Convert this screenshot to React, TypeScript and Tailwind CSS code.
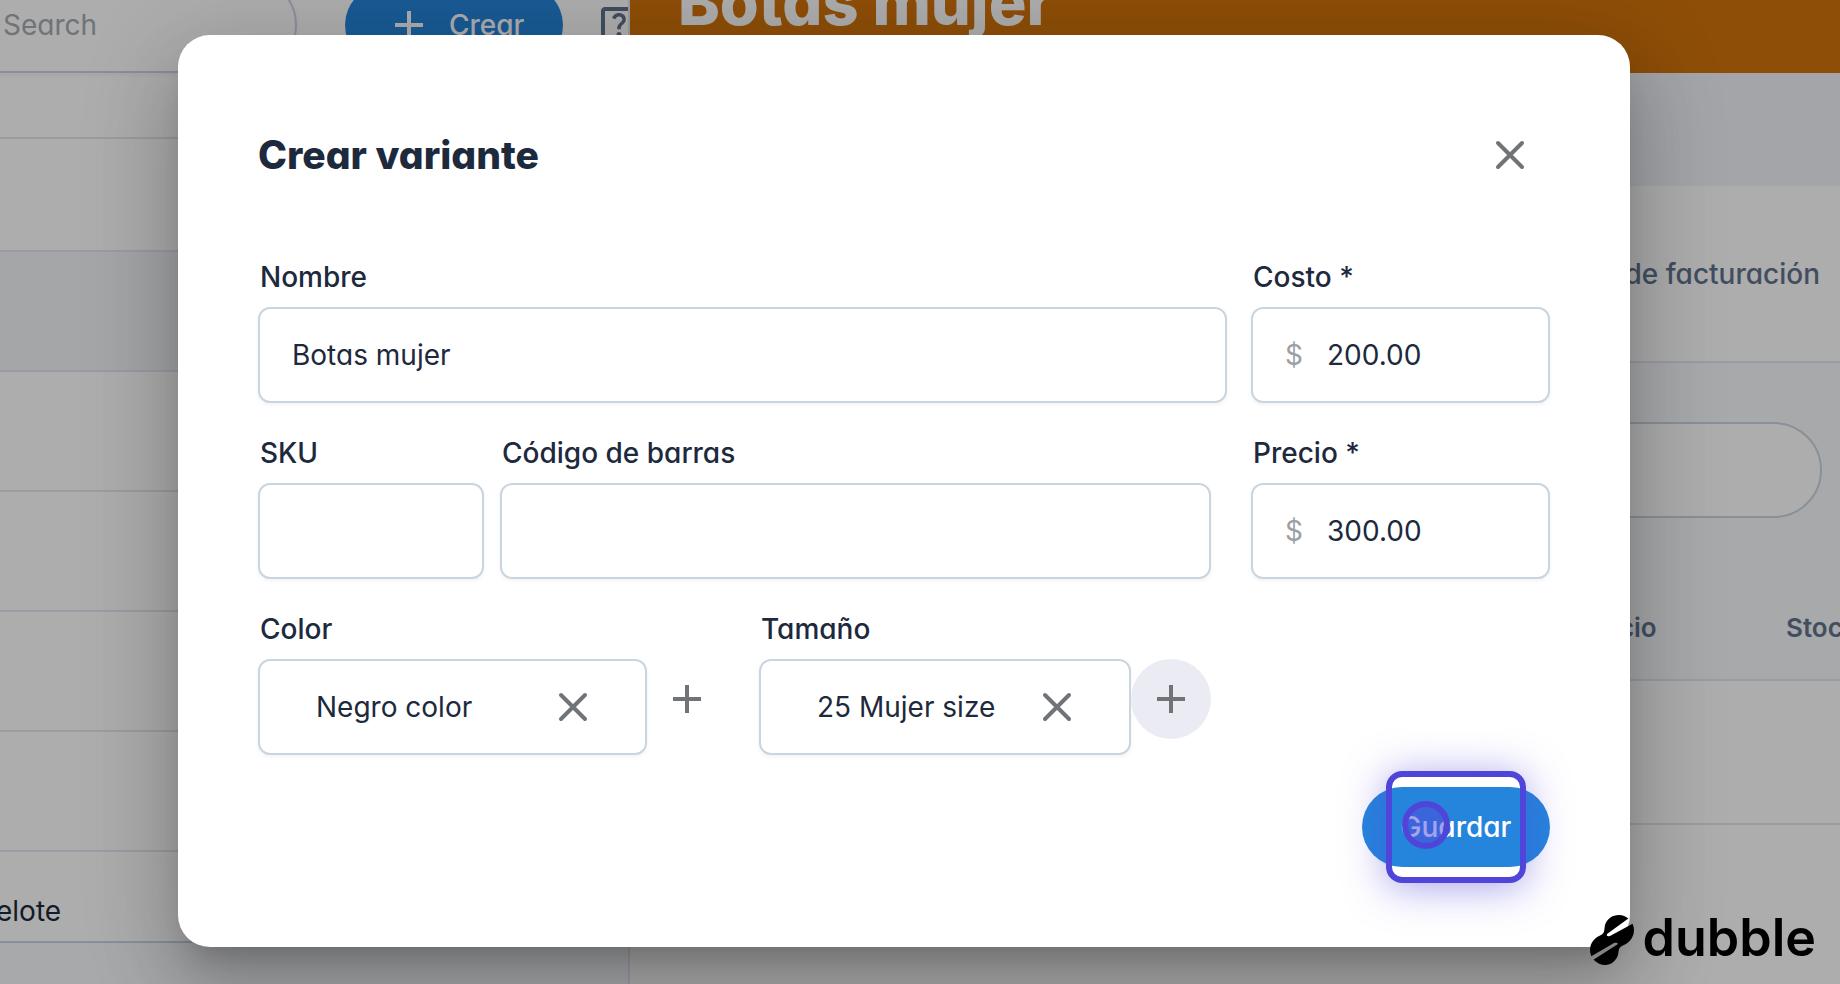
import type { ComponentProps, ReactNode } from "react";
import { MdAdd, MdOutlineHelpCenter } from "react-icons/md";

const products = ["", "", "", "", "", "", "elote"];

function XIcon(props: ComponentProps<"svg">) {
    return (
        <svg viewBox="0 0 24 24" fill="none" stroke="currentColor" strokeWidth="2" strokeLinecap="round" aria-hidden="true" {...props}>
            <path d="M6 18L18 6M6 6l12 12" />
        </svg>
    );
}

function DubbleMark(props: ComponentProps<"svg">) {
    return (
        <svg viewBox="0 -3 44 53" aria-hidden="true" {...props}>
            <mask id="slits">
                <rect width="44" height="50" fill="#fff" />
                <path d="M39 3L17 19Q16 22 20 21L44 8Z" fill="#000" />
                <path d="M0 42L24 28Q27 27 28 29L3 45Z" fill="#000" />
            </mask>
            <path
                mask="url(#slits)"
                d="M29 0C37 0 44 7 44 15C44 24 37 29 32 31C28 33 29 36 28 40C26 46 21 50 15 50C7 50 0 43 0 35C0 27 6 22 11 20C15 18 14 15 15 10C17 4 22 0 29 0Z"
            />
        </svg>
    );
}

function Field({ id, label, className = "", children }: { id: string; label: string; className?: string; children: ReactNode }) {
    return (
        <div className={className}>
            <label htmlFor={id} className="mb-2 ml-[2px] block leading-[44px] font-medium whitespace-nowrap">
                {label}
            </label>
            <div className="flex h-24 items-center rounded-xl border-2 border-slate-300 bg-white shadow-[0_2px_4px_rgba(0,0,0,0.05)]">
                {children}
            </div>
        </div>
    );
}

function TextInput(props: ComponentProps<"input">) {
    return <input type="text" className="h-full w-full min-w-0 px-8 outline-none" {...props} />;
}

function MoneyInput({ id, value }: { id: string; value: string }) {
    return (
        <>
            <span className="pl-8 text-[#9c9fa3]">$</span>
            <input id={id} type="text" defaultValue={value} className="h-full w-full min-w-0 pl-6 outline-none" />
        </>
    );
}

function ChoiceInput({ id, value }: { id: string; value: string }) {
    return (
        <>
            <input id={id} type="text" defaultValue={value} className="h-full w-full min-w-0 pl-14 outline-none" />
            <button type="button" aria-label="Quitar" className="mr-8 flex size-20 shrink-0 items-center justify-center text-[#707478]">
                <XIcon className="size-12" />
            </button>
        </>
    );
}

function Sidebar() {
    return (
        <aside className="flex w-[630px] shrink-0 flex-col overflow-hidden border-r-2 border-slate-200 bg-white">
            {/* La barra queda desplazada hacia arriba, como con scroll */}
            <div className="-mt-[23px] flex h-24 shrink-0 items-center">
                <input
                    type="search"
                    aria-label="Buscar"
                    placeholder="Search"
                    className="-ml-12 h-24 w-[345px] shrink-0 rounded-full border-2 border-slate-300 pl-[49px] shadow-[0_2px_4px_rgba(0,0,0,0.05)] outline-none placeholder:text-[#a3abb0]"
                />
                <button type="button" className="ml-12 flex h-20 w-[218px] shrink-0 items-center gap-4 rounded-full bg-[#2585dc] pl-10 font-medium text-white">
                    <MdAdd className="size-12" />
                    Crear
                </button>
                <button type="button" aria-label="Ayuda" className="ml-8 shrink-0 text-slate-500">
                    <MdOutlineHelpCenter className="size-12" />
                </button>
            </div>
            <div className="h-[66px] shrink-0 border-b-2 border-slate-200" />
            <ul className="min-h-0 flex-1 overflow-hidden">
                {products.map((name, i) => (
                    <li
                        key={i}
                        className={`flex items-center border-b-2 border-slate-200 first:h-[113px] ${i === 1 ? "h-[120px] bg-[#f3f5f7]" : "h-[120px]"}`}
                    >
                        <span className="-ml-1">{name}</span>
                    </li>
                ))}
            </ul>
            <div className="h-[43px] shrink-0 border-t-2 border-slate-300 bg-slate-50" />
        </aside>
    );
}

function ProductPanel() {
    return (
        <main className="flex min-w-0 flex-1 flex-col bg-white">
            <header className="flex h-[73px] shrink-0 items-start overflow-hidden bg-[#d2730d] pl-12">
                <h1 className="-mt-[38px] text-[63px] leading-[80px] font-extrabold whitespace-nowrap text-white">Botas mujer</h1>
            </header>
            <div className="h-[113px] shrink-0 bg-[#f1f4f9]" />
            <nav className="flex h-[177px] shrink-0 items-center justify-end border-b-2 border-slate-200 pr-5">
                <a href="#facturacion" className="font-medium text-slate-500">
                    Datos de facturación
                </a>
            </nav>
            <section className="shrink-0 border-b-2 border-slate-200 bg-slate-50">
                <div className="pt-[59px] pr-[18px] pl-12">
                    <input
                        type="search"
                        aria-label="Buscar variante"
                        className="h-24 w-full rounded-full border-2 border-slate-300 bg-white px-8 outline-none"
                    />
                </div>
                <div className="flex h-[161px] items-center justify-end overflow-hidden pt-[57px] text-[26px] font-semibold text-slate-500">
                    <span className="w-[209px] shrink-0">Precio</span>
                    <span className="-mr-[38px] w-[92px] shrink-0">Stock</span>
                </div>
            </section>
            <div className="h-[144px] shrink-0 border-b-2 border-slate-200" />
        </main>
    );
}

function VariantDialog() {
    return (
        <div
            role="dialog"
            aria-modal="true"
            aria-labelledby="dialog-title"
            className="w-full rounded-[32px] bg-white px-20 pt-20 pb-20 shadow-[0_22px_30px_-14px_rgba(0,0,0,0.2),0_48px_76px_6px_rgba(0,0,0,0.14),0_18px_92px_16px_rgba(0,0,0,0.12)]"
        >
            <div className="flex h-20 items-center justify-between">
                <h2 id="dialog-title" className="text-[39px] font-extrabold">
                    Crear variante
                </h2>
                <button type="button" aria-label="Cerrar" className="flex size-20 items-center justify-center text-[#707478]">
                    <XIcon className="size-12" />
                </button>
            </div>
            <form className="mt-[60px] flex flex-col gap-7">
                <div className="flex gap-6">
                    <Field id="nombre" label="Nombre" className="flex-1">
                        <TextInput id="nombre" defaultValue="Botas mujer" />
                    </Field>
                    <Field id="costo" label="Costo *" className="w-[299px]">
                        <MoneyInput id="costo" value="200.00" />
                    </Field>
                </div>
                <div className="flex">
                    <Field id="sku" label="SKU" className="w-[226px]">
                        <TextInput id="sku" />
                    </Field>
                    <Field id="codigo" label="Código de barras" className="ml-4 flex-1">
                        <TextInput id="codigo" />
                    </Field>
                    <Field id="precio" label="Precio *" className="ml-10 w-[299px]">
                        <MoneyInput id="precio" value="300.00" />
                    </Field>
                </div>
                <div className="flex">
                    <Field id="color" label="Color" className="w-[389px]">
                        <ChoiceInput id="color" value="Negro color" />
                    </Field>
                    <button type="button" aria-label="Agregar color" className="mt-[52px] flex size-20 items-center justify-center rounded-full text-[#707478]">
                        <MdAdd className="size-12" />
                    </button>
                    <Field id="tamano" label="Tamaño" className="ml-8 w-[372px]">
                        <ChoiceInput id="tamano" value="25 Mujer size" />
                    </Field>
                    <button type="button" aria-label="Agregar tamaño" className="mt-[52px] flex size-20 items-center justify-center rounded-full bg-[#ebebf4] text-[#707478]">
                        <MdAdd className="size-12" />
                    </button>
                </div>
                <div className="mt-1 flex justify-end">
                    <button type="submit" className="relative flex h-20 w-[188px] items-center justify-center rounded-full bg-[#2585dc] font-medium text-white">
                        Guardar
                        {/* Marca del clic grabado */}
                        <span className="absolute -inset-y-4 inset-x-6 rounded-2xl border-6 border-[#4f46d9] shadow-[0_4px_40px_rgba(79,70,217,0.5)]" />
                        <span className="absolute top-[14px] left-10 size-12 rounded-full border-6 border-[#4f46d9] bg-[#4f46d9]/50" />
                    </button>
                </div>
            </form>
        </div>
    );
}

export default function App() {
    return (
        <div className="relative flex h-screen overflow-hidden font-['Inter',sans-serif] text-[28px] text-slate-800 [font-feature-settings:'cv11']">
            <Sidebar />
            <ProductPanel />
            <div className="absolute inset-0 flex items-start bg-black/32 pt-[35px] pr-[210px] pl-[178px]">
                <VariantDialog />
            </div>
            <a href="#dubble" className="absolute right-6 bottom-4 flex items-center gap-2 text-[52px] leading-[60px] font-semibold text-black">
                <DubbleMark className="h-[53px] w-11" />
                dubble
            </a>
        </div>
    );
}
